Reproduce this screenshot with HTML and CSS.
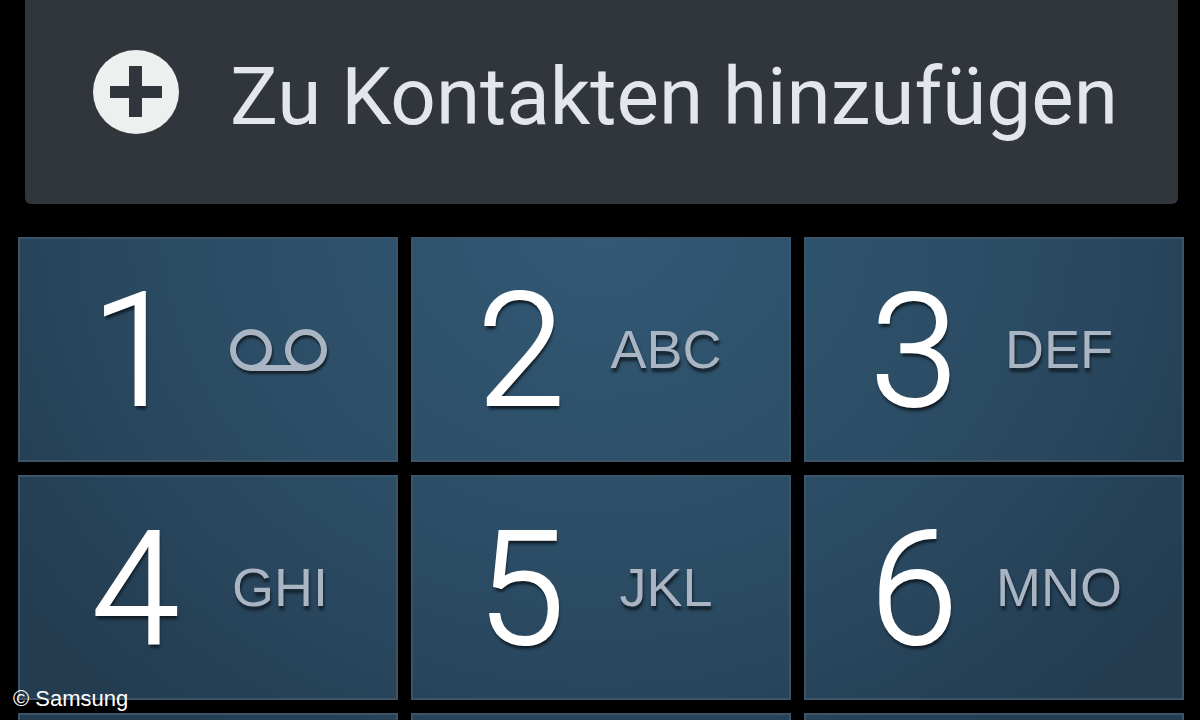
FILE: index.html
```html
<!DOCTYPE html>
<html lang="de">
  <head>
    <meta charset="UTF-8" />
    <meta name="viewport" content="width=device-width, initial-scale=1.0" />
    <title>Telefon</title>
    <link rel="stylesheet" href="styles.css">
  </head>
  <body>
    <main class="dialer">
      <button class="add-contact" type="button">
        <svg class="add-icon" viewBox="0 0 86 84" aria-hidden="true">
          <ellipse cx="43" cy="42" rx="43" ry="42" />
          <path d="M17 36h19V16h13v20h20v12H49v19H36V48H17z" />
        </svg>
        <span class="add-text">Zu Kontakten hinzufügen</span>
      </button>

      <div class="keypad">
        <button class="key" type="button">
          <span class="digit">1</span>
          <span class="letters">
            <svg class="voicemail-icon" viewBox="0 0 100 50" aria-hidden="true">
              <circle cx="21" cy="25" r="18" />
              <circle cx="76" cy="25" r="18" />
              <path d="M21 43h55" />
            </svg>
          </span>
        </button>
        <button class="key" type="button">
          <span class="digit">2</span>
          <span class="letters">ABC</span>
        </button>
        <button class="key" type="button">
          <span class="digit">3</span>
          <span class="letters">DEF</span>
        </button>
        <button class="key" type="button">
          <span class="digit">4</span>
          <span class="letters">GHI</span>
        </button>
        <button class="key" type="button">
          <span class="digit">5</span>
          <span class="letters">JKL</span>
        </button>
        <button class="key" type="button">
          <span class="digit">6</span>
          <span class="letters">MNO</span>
        </button>
        <button class="key key-cut" type="button"></button>
        <button class="key key-cut" type="button"></button>
        <button class="key key-cut" type="button"></button>
      </div>
    </main>
    <small class="credit">© Samsung</small>
  </body>
</html>
```
FILE: styles.css
```css
* {
  box-sizing: border-box;
}

body {
  position: relative;
  margin: 0;
  background-color: #000;
  font-family: "Liberation Sans", Arial, sans-serif;
}

button {
  margin: 0;
  border: 0;
  cursor: pointer;
}

.dialer {
  display: flex;
  flex-direction: column;
  min-height: 100vh;
  padding: 0 16px 0 18px;
}

.add-contact {
  display: flex;
  align-items: center;
  gap: 51px;
  height: 204px;
  margin: 0 6px 33px 7px;
  padding: 0 0 20px 68px;
  border-radius: 0 0 6px 6px;
  background-color: #31363c;
  color: #e3e7eb;
  font-family: Roboto, sans-serif;
  font-size: 80px;
  line-height: 96px;
  white-space: nowrap;
}

.add-icon {
  flex: none;
  width: 86px;
  height: 84px;
  fill: #edf0ef;
}

.add-icon path {
  fill: #31363c;
}

.add-text {
  padding-top: 10px;
}

.keypad {
  display: grid;
  flex: 1;
  grid-template-columns: repeat(3, 1fr);
  grid-template-rows: 225px 225px 1fr;
  gap: 13px;
}

/* fixed attachment makes one glow run across all the keys */
.key {
  display: grid;
  grid-template-columns: 120px 170px;
  align-items: center;
  justify-content: center;
  padding: 0 0 0 10px;
  border: 2px solid #3b5468;
  background: radial-gradient(ellipse 720px 640px at 50% 220px, #335975, #2b4b63 60%, #233c50) fixed;
  color: #fff;
}

.key:nth-child(3n + 1) {
  padding-left: 24px;
}

.key-cut {
  border-bottom: 0;
}

.digit {
  padding-top: 2px;
  font-family: Roboto, sans-serif;
  font-size: 158px;
  font-weight: 300;
  line-height: 180px;
  text-shadow: 1px 4px 3px #101c26;
  -webkit-text-stroke: 2px #fff;
}

.letters {
  padding-bottom: 2px;
  color: #a9b5c2;
  font-family: "Liberation Sans", Arial, sans-serif;
  font-size: 54px;
  line-height: 60px;
  text-shadow: 1px 4px 3px #14212c;
}

.voicemail-icon {
  display: block;
  width: 100px;
  height: 50px;
  margin: 2px auto 0;
  fill: none;
  stroke: #a9b5c2;
  stroke-width: 6;
  filter: drop-shadow(1px 3px 1px #14212c);
}

.credit {
  position: absolute;
  bottom: 8px;
  left: 13px;
  color: #fff;
  font-size: 22px;
  line-height: 26px;
}
```
